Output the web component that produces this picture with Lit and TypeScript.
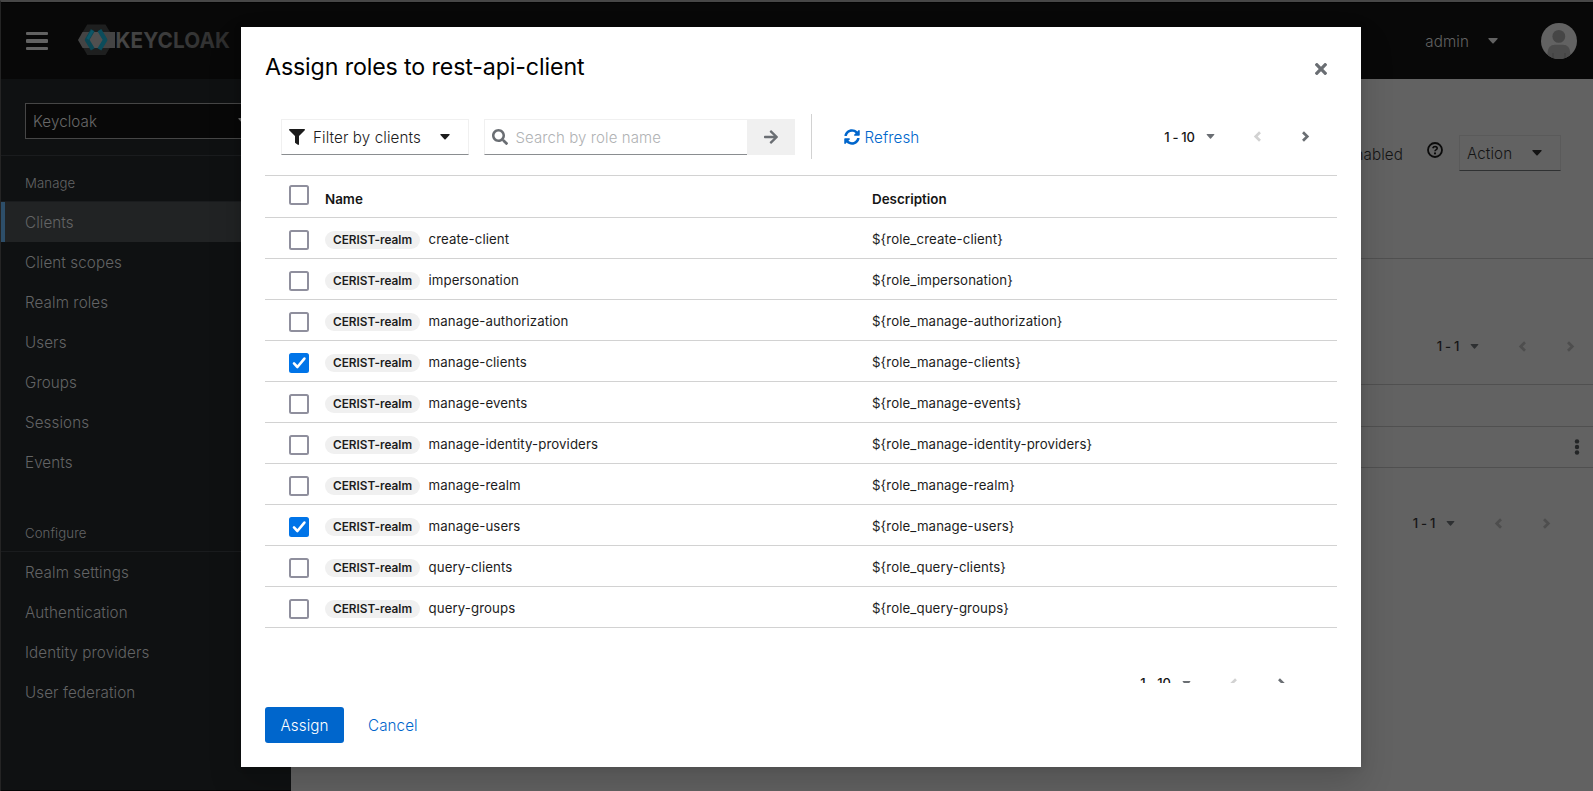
import { LitElement, html, css, svg } from "lit";
import { customElement, property } from "lit/decorators.js";
import { classMap } from "lit/directives/class-map.js";

const caret = html`<svg class="caret" viewBox="0 0 10 6"><path d="M0.8 0H9.2Q10 0.2 9.5 1L5.6 5.3Q5 5.8 4.4 5.3L0.5 1Q0 0.2 0.8 0Z" fill="currentColor"/></svg>`;

const chevron = (dir: "left" | "right") => svg`<path d=${dir === "left" ? "M7 1.2L2.7 5.5L7 9.8" : "M3 1.2L7.3 5.5L3 9.8"} fill="none" stroke="currentColor" stroke-width="2.7" />`;

const icons = {
  filter: html`<svg width="16" height="16" viewBox="0 0 512 512"><path fill="currentColor" d="M487.976 0H24.028C2.71 0-8.047 25.866 7.058 40.971L192 225.941V432c0 7.831 3.821 15.17 10.237 19.662l80 55.98C298.02 518.69 320 507.493 320 487.98V225.941l184.947-184.97C520.021 25.896 509.338 0 487.976 0z"/></svg>`,
  search: html`<svg width="16" height="16" viewBox="0 0 512 512"><path fill="currentColor" d="M505 442.7L405.3 343c-4.5-4.5-10.6-7-17-7H372c27.6-35.3 44-79.7 44-128C416 93.1 322.9 0 208 0S0 93.1 0 208s93.1 208 208 208c48.3 0 92.7-16.4 128-44v16.3c0 6.4 2.5 12.5 7 17l99.7 99.7c9.4 9.4 24.6 9.4 33.9 0l28.3-28.3c9.4-9.4 9.4-24.6.1-34zM208 336c-70.7 0-128-57.2-128-128 0-70.7 57.2-128 128-128 70.7 0 128 57.2 128 128 0 70.7-57.2 128-128 128z"/></svg>`,
  arrow: html`<svg width="14" height="16" viewBox="0 0 448 512"><path fill="currentColor" d="M190.5 66.9l22.2-22.2c9.4-9.4 24.6-9.4 33.9 0L441 239c9.4 9.4 9.4 24.6 0 33.9L246.6 467.3c-9.4 9.4-24.6 9.4-33.9 0l-22.2-22.2c-9.5-9.5-9.3-25 .4-34.3L311.4 296H24c-13.3 0-24-10.7-24-24v-32c0-13.3 10.7-24 24-24h287.4L190.9 101.2c-9.8-9.3-10-24.8-.4-34.3z"/></svg>`,
  sync: html`<svg width="16" height="16" viewBox="0 0 512 512"><path fill="currentColor" d="M370.72 133.28C339.458 104.008 298.888 87.962 255.848 88c-77.458.068-144.328 53.178-162.791 126.85-1.344 5.363-6.122 9.15-11.651 9.15H24.103c-7.498 0-13.194-6.807-11.807-14.176C33.933 94.924 134.813 8 256 8c66.448 0 126.791 26.136 171.315 68.685L463.03 40.97C478.149 25.851 504 36.559 504 57.941V192c0 13.255-10.745 24-24 24H345.941c-21.382 0-32.09-25.851-16.971-40.971l41.75-41.749zM32 296h134.059c21.382 0 32.09 25.851 16.971 40.971l-41.75 41.75c31.262 29.273 71.835 45.319 114.876 45.28 77.418-.07 144.315-53.144 162.787-126.849 1.344-5.363 6.122-9.15 11.651-9.15h57.304c7.498 0 13.194 6.807 11.807 14.176C478.067 417.076 377.187 504 256 504c-66.448 0-126.791-26.136-171.315-68.685L48.97 471.03C33.851 486.149 8 475.441 8 454.059V320c0-13.255 10.745-24 24-24z"/></svg>`,
  close: html`<svg width="12" height="12" viewBox="0 80 352 352"><path fill="currentColor" d="M242.72 256l100.07-100.07c12.28-12.28 12.28-32.19 0-44.48l-22.24-22.24c-12.28-12.28-32.19-12.28-44.48 0L176 189.28 75.93 89.21c-12.28-12.28-32.19-12.28-44.48 0L9.21 111.45c-12.28 12.28-12.28 32.19 0 44.48L109.28 256 9.21 356.07c-12.28 12.28-12.28 32.19 0 44.48l22.24 22.24c12.28 12.28 32.2 12.28 44.48 0L176 322.72l100.07 100.07c12.28 12.28 32.2 12.28 44.48 0l22.24-22.24c12.28-12.28 12.28-32.19 0-44.48L242.72 256z"/></svg>`,
  help: html`<svg width="16" height="16" viewBox="0 0 16 16"><circle cx="8" cy="8" r="7" fill="none" stroke="currentColor" stroke-width="1.8"/><path d="M5.8 6.2Q6.3 4.5 8 4.5Q10.2 4.6 10.2 6.3Q10.2 7.3 9 7.9Q8 8.4 8 9.3" fill="none" stroke="currentColor" stroke-width="1.6"/><circle cx="8" cy="11.4" r="1.05" fill="currentColor"/></svg>`,
  kebab: html`<svg width="6" height="16" viewBox="0 0 6 16"><g fill="currentColor"><circle cx="3" cy="2.4" r="2.2"/><circle cx="3" cy="8" r="2.2"/><circle cx="3" cy="13.5" r="2.2"/></g></svg>`,
  avatar: html`<svg width="36" height="36" viewBox="0 0 36 36"><defs><clipPath id="disc"><circle cx="18" cy="18" r="18"/></clipPath></defs><g clip-path="url(#disc)"><rect width="36" height="36" fill="#626262"/><circle cx="17.8" cy="13.4" r="6.4" fill="#464646"/><path d="M6.5 36V30Q6.7 22 14 21.8H22Q29 22 29.3 30V36Z" fill="#4c4c4c"/><path d="M12 30V36M24 30V36" stroke="#434343" stroke-width="1.4"/></g></svg>`,
  logo: html`<svg class="logo" width="160" height="32" viewBox="0 0 160 32">
    <defs><linearGradient id="fade" x1="0" x2="1"><stop offset="0" stop-color="#474747"/><stop offset="1" stop-color="#2c2c2c"/></linearGradient></defs>
    <path d="M9.2 0.5H27.5L33 9.6V22L27.5 31H9.2L3.5 21V10Z" fill="#1e1f1f"/>
    <path d="M4.6 8H37V24H4.6L0 16Z" fill="#444444"/>
    <path d="M14.5 8H22L27 16L22 24H14.5L10 16Z" fill="#505050"/>
    <path d="M14.8 6.2L9 15.8L14.8 25.4" fill="none" stroke="#0b4653" stroke-width="4.4" stroke-linejoin="round"/>
    <path d="M21.4 6.2L27.2 15.8L21.4 25.4" fill="none" stroke="#0b4c5b" stroke-width="4.4" stroke-linejoin="round"/>
    <path d="M14.6 6.6L9.6 15" fill="none" stroke="#0c5667" stroke-width="2.8"/>
    <text x="37.5" y="24" font-family="Inter, sans-serif" font-weight="700" font-size="22" textLength="114.5" lengthAdjust="spacingAndGlyphs" fill="url(#fade)">KEYCLOAK</text>
  </svg>`,
};

@customElement("kc-pager")
class KcPager extends LitElement {
  @property() range = "1 - 10";
  @property({ type: Boolean }) next = false;

  static styles = css`
    :host { display: flex; align-items: center; height: 36px; color: #151515; font: 500 13px/20px Inter, sans-serif; }
    .range { letter-spacing: -0.3px; white-space: pre; }
    .caret { width: 9px; height: 5px; margin-left: 11px; margin-right: 38.5px; color: var(--pager-caret, #6a6e73); }
    .step { display: flex; width: 47px; }
    .off { color: var(--pager-off, #d2d2d2); }
    .on { color: #6a6e73; }
    .step:last-child { width: 10px; }
  `;

  render() {
    return html`
      <span class="range">${this.range}</span>${caret}
      <span class="step off"><svg width="10" height="11">${chevron("left")}</svg></span>
      <span class=${classMap({ step: true, on: this.next, off: !this.next })}><svg width="10" height="11">${chevron("right")}</svg></span>
    `;
  }
}

@customElement("kc-checkbox")
class KcCheckbox extends LitElement {
  @property({ type: Boolean }) checked = false;

  static styles = css`
    :host { display: block; width: 20px; height: 20px; }
    .box { box-sizing: border-box; width: 20px; height: 20px; border: 2px solid #8f8f9d; border-radius: 2.5px; background: #fff; }
    .checked { border-color: #0074e8; background: #0074e8; }
    svg { display: block; }
  `;

  render() {
    return html`<div class=${classMap({ box: true, checked: this.checked })}>
      ${this.checked ? html`<svg width="16" height="16"><path d="M3 8.4L6.4 12L13.4 3.6" fill="none" stroke="#fff" stroke-width="2.6" stroke-linecap="round" stroke-linejoin="round"/></svg>` : ""}
    </div>`;
  }
}

const manage = ["Clients", "Client scopes", "Realm roles", "Users", "Groups", "Sessions", "Events"];
const configure = ["Realm settings", "Authentication", "Identity providers", "User federation"];
const roles = [
  "create-client", "impersonation", "manage-authorization", "manage-clients", "manage-events",
  "manage-identity-providers", "manage-realm", "manage-users", "query-clients", "query-groups",
];
const selected = new Set(["manage-clients", "manage-users"]);

@customElement("app-root")
class AppRoot extends LitElement {
  static styles = css`
    :host {
      display: block; position: relative; box-sizing: border-box; width: 1593px; height: 791px; overflow: hidden;
      background: #626262; color: #1c1c1c; font: 350 15.2px/24px Inter, sans-serif; letter-spacing: 0.09px;
      border-top: 2px solid #474747; border-left: 1px solid #242424;
    }
    * { box-sizing: border-box; }
    svg { display: block; flex: none; }
    .caret { width: 10px; height: 6px; }

    .masthead { display: flex; align-items: center; height: 77px; padding: 0 16px 0 25px; background: #080808; border-top: 1px solid #030303; color: #626262; }
    .burger { display: flex; flex-direction: column; gap: 4.5px; width: 22px; margin-right: 30px; }
    .burger i { height: 3.2px; border-radius: 1px; background: #626262; }
    .logo { margin-bottom: 2px; }
    .user { display: flex; align-items: center; margin-left: auto; }
    .user span { padding-top: 2px; }
    .user .caret { margin: 0 43px 0 19px; }
    .shell { display: flex; height: 712px; }

    .sidebar { width: 290px; background: #0f1112; color: #636465; border-bottom: 1px solid #050505; }
    .realm { padding: 24px 24px 15px; height: 77px; border-bottom: 1px solid #1a1c1e; }
    .realm-select { display: flex; align-items: center; justify-content: space-between; height: 36px; padding: 0 18px 0 7px; background: #080808; border: 1px solid #464646; color: #686868; }
    .realm-select span { padding-top: 2px; }
    .group { height: 46px; padding: 15px 24px 0; border-bottom: 1px solid #1a1c1e; font-size: 13.2px; line-height: 24px; }
    .group.second { height: 70px; padding-top: 39px; }
    .item { height: 40px; padding: 9px 24px 0; }
    .item.current { padding-left: 20px; border-left: 4px solid #2d4e69; background: #212324; }

    .main { flex: 1; --pager-caret: #2e3032; --pager-off: #4e4e4e; }
    .detail { display: flex; justify-content: flex-end; align-items: flex-start; height: 180px; padding: 56px 32px 0 0; border-bottom: 1px solid #505050; color: #141414; }
    .enabled { padding-top: 8px; margin-right: 24px; }
    .help { margin: 7px 16px 0 0; color: #0a0a0a; }
    .action { display: flex; align-items: center; justify-content: space-between; width: 102px; height: 36px; padding: 0 18px 0 7px; border: 1px solid #5a5a5a; border-bottom-color: #2f3132; }
    .action span { padding-top: 2px; }
    .pager-row { display: flex; justify-content: flex-end; }
    .pager-row.top { height: 126px; padding: 69px 18.5px 0 0; border-bottom: 1px solid #505050; }
    .pager-row.bottom { padding: 37px 42.5px 0 0; }
    .blank { height: 42px; border-bottom: 1px solid #505050; }
    .kebab { display: flex; justify-content: flex-end; align-items: center; height: 41px; padding-right: 13px; border-bottom: 1px solid #505050; color: #232526; }

    .modal {
      position: absolute; left: 240px; top: 25px; width: 1120px; height: 740px; padding: 24px; background: #fff;
      display: flex; flex-direction: column;
      box-shadow: 0 16px 32px rgba(3, 3, 3, 0.16), 0 0 8px rgba(3, 3, 3, 0.1);
    }
    .head { display: flex; justify-content: space-between; height: 52px; padding-right: 10px; }
    h1 { margin: 0; font-size: 23.2px; line-height: 32px; font-weight: 400; letter-spacing: -0.12px; color: #000; }
    .close { margin-top: 12px; color: #6a6e73; }
    .body { height: 580px; overflow: hidden; }
    .toolbar { display: flex; align-items: center; height: 72px; padding: 0 27px 5px 16px; }
    .filter, .search, .go { height: 36px; display: flex; align-items: center; }
    .filter { width: 188px; padding: 0 18px 0 7px; border: 1px solid #f0f0f0; border-bottom-color: #8a8d90; }
    .filter span { flex: 1; margin-left: 8px; padding-top: 2px; }
    .search { width: 263px; margin-left: 15px; padding-left: 7px; gap: 7.5px; border: 1px solid #f0f0f0; border-right: 0; border-bottom-color: #8a8d90; color: #b0b2b4; }
    .search svg { color: #6a6e73; }
    .search span { padding-top: 2px; font-size: 15px; }
    .go { width: 48px; justify-content: center; background: #f0f0f0; color: #6a6e73; }
    .rule { width: 1px; height: 45px; margin: 0 32px 0 16px; background: #d2d2d2; }
    .refresh { display: flex; align-items: center; gap: 4.5px; margin-right: auto; color: #0066cc; }
    .refresh span { padding-top: 2px; }
    .row { display: grid; grid-template-columns: 60px 547px 1fr; align-items: center; height: 41px; padding-top: 3px; border-bottom: 1px solid #d2d2d2; font-size: 13.25px; line-height: 20px; font-weight: 380; }
    .row kc-checkbox { margin-left: 24px; }
    .row.header { height: 43px; padding-top: 5px; border-top: 1px solid #d2d2d2; font-weight: 600; font-size: 13.4px; letter-spacing: 0; color: #151515; }
    .row.header kc-checkbox { margin-top: -8px; }
    .name { display: flex; align-items: center; gap: 8.5px; }
    .tag { width: 95px; height: 18px; border-radius: 9px; background: #f0f0f0; text-align: center; font-size: 11.8px; line-height: 18px; font-weight: 600; letter-spacing: 0; }
    .cell { margin-top: -2px; }
    .again { display: flex; justify-content: flex-end; height: 73px; padding: 37px 51px 0 0; }
    .foot { display: flex; align-items: center; gap: 24px; margin-top: 24px; }
    .assign { height: 36px; padding: 7px 0 0; width: 79px; text-align: center; border-radius: 3px; background: #0066cc; color: #fff; }
    .cancel { padding-top: 2px; color: #0066cc; }
  `;

  render() {
    return html`
      <header class="masthead">
        <div class="burger"><i></i><i></i><i></i></div>
        ${icons.logo}
        <div class="user"><span>admin</span>${caret}${icons.avatar}</div>
      </header>
      <div class="shell">
        <nav class="sidebar">
          <div class="realm"><div class="realm-select"><span>Keycloak</span>${caret}</div></div>
          <div class="group">Manage</div>
          ${manage.map((t) => html`<div class=${classMap({ item: true, current: t === "Clients" })}>${t}</div>`)}
          <div class="group second">Configure</div>
          ${configure.map((t) => html`<div class="item">${t}</div>`)}
        </nav>
        <main class="main">
          <div class="detail">
            <span class="enabled">Enabled</span>
            <span class="help">${icons.help}</span>
            <div class="action"><span>Action</span>${caret}</div>
          </div>
          <div class="pager-row top"><kc-pager range="1 - 1"></kc-pager></div>
          <div class="blank"></div>
          <div class="kebab">${icons.kebab}</div>
          <div class="pager-row bottom"><kc-pager range="1 - 1"></kc-pager></div>
        </main>
      </div>
      <section class="modal" role="dialog">
        <div class="head"><h1>Assign roles to rest-api-client</h1><span class="close">${icons.close}</span></div>
        <div class="body">
          <div class="toolbar">
            <div class="filter">${icons.filter}<span>Filter by clients</span>${caret}</div>
            <div class="search">${icons.search}<span>Search by role name</span></div>
            <div class="go">${icons.arrow}</div>
            <div class="rule"></div>
            <div class="refresh">${icons.sync}<span>Refresh</span></div>
            <kc-pager range="1 - 10" next></kc-pager>
          </div>
          <div class="row header"><kc-checkbox></kc-checkbox><span>Name</span><span>Description</span></div>
          ${roles.map((r) => html`
            <div class="row">
              <kc-checkbox ?checked=${selected.has(r)}></kc-checkbox>
              <div class="name"><span class="tag">CERIST-realm</span><span class="cell">${r}</span></div>
              <span class="cell">${"${role_" + r + "}"}</span>
            </div>`)}
          <div class="again"><kc-pager range="1 - 10" next></kc-pager></div>
        </div>
        <div class="foot"><div class="assign">Assign</div><span class="cancel">Cancel</span></div>
      </section>
    `;
  }
}
